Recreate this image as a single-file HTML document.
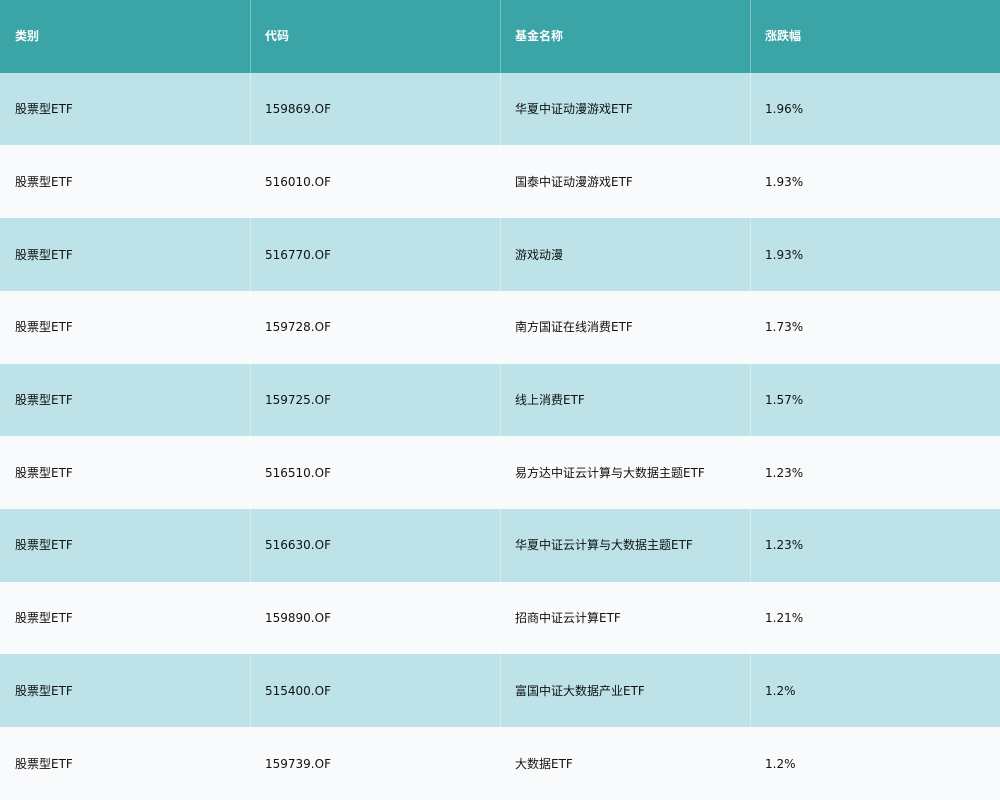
<!DOCTYPE html>
<html><head><meta charset="utf-8"><style>
html,body{margin:0;padding:0;width:1000px;height:800px;overflow:hidden;background:#f8fafc}
.t{position:relative;width:1000px;height:800px;font-family:"DejaVu Sans","Noto Sans CJK SC",sans-serif;font-size:12px;color:#111}
.r{position:absolute;left:0;width:1000px;height:73px;display:flex;align-items:center}
.c{width:250px;box-sizing:border-box;padding-left:15px;line-height:16px;white-space:nowrap}
.h{background:#3ba4a7;color:#fff;font-weight:bold;top:0}
.h .c{position:relative;top:-1px}
.a{background:#bde3e9}
.b{background:#f8fafc}
.v{position:absolute;top:0;width:1px;height:800px;background:rgba(255,255,255,0.35)}
</style></head><body>
<div class="t">
<div class="r h" style="top:0;height:73px"><div class="c">类别</div><div class="c">代码</div><div class="c">基金名称</div><div class="c">涨跌幅</div></div>
<div class="r a" style="top:72.7px"><div class="c">股票型ETF</div><div class="c">159869.OF</div><div class="c">华夏中证动漫游戏ETF</div><div class="c">1.96%</div></div>
<div class="r b" style="top:145.4px"><div class="c">股票型ETF</div><div class="c">516010.OF</div><div class="c">国泰中证动漫游戏ETF</div><div class="c">1.93%</div></div>
<div class="r a" style="top:218.1px"><div class="c">股票型ETF</div><div class="c">516770.OF</div><div class="c">游戏动漫</div><div class="c">1.93%</div></div>
<div class="r b" style="top:290.8px"><div class="c">股票型ETF</div><div class="c">159728.OF</div><div class="c">南方国证在线消费ETF</div><div class="c">1.73%</div></div>
<div class="r a" style="top:363.5px"><div class="c">股票型ETF</div><div class="c">159725.OF</div><div class="c">线上消费ETF</div><div class="c">1.57%</div></div>
<div class="r b" style="top:436.2px"><div class="c">股票型ETF</div><div class="c">516510.OF</div><div class="c">易方达中证云计算与大数据主题ETF</div><div class="c">1.23%</div></div>
<div class="r a" style="top:508.9px"><div class="c">股票型ETF</div><div class="c">516630.OF</div><div class="c">华夏中证云计算与大数据主题ETF</div><div class="c">1.23%</div></div>
<div class="r b" style="top:581.6px"><div class="c">股票型ETF</div><div class="c">159890.OF</div><div class="c">招商中证云计算ETF</div><div class="c">1.21%</div></div>
<div class="r a" style="top:654.3px"><div class="c">股票型ETF</div><div class="c">515400.OF</div><div class="c">富国中证大数据产业ETF</div><div class="c">1.2%</div></div>
<div class="r b" style="top:727px"><div class="c">股票型ETF</div><div class="c">159739.OF</div><div class="c">大数据ETF</div><div class="c">1.2%</div></div>
<div class="v" style="left:250px"></div><div class="v" style="left:500px"></div><div class="v" style="left:750px"></div>
</div>
</body></html>
